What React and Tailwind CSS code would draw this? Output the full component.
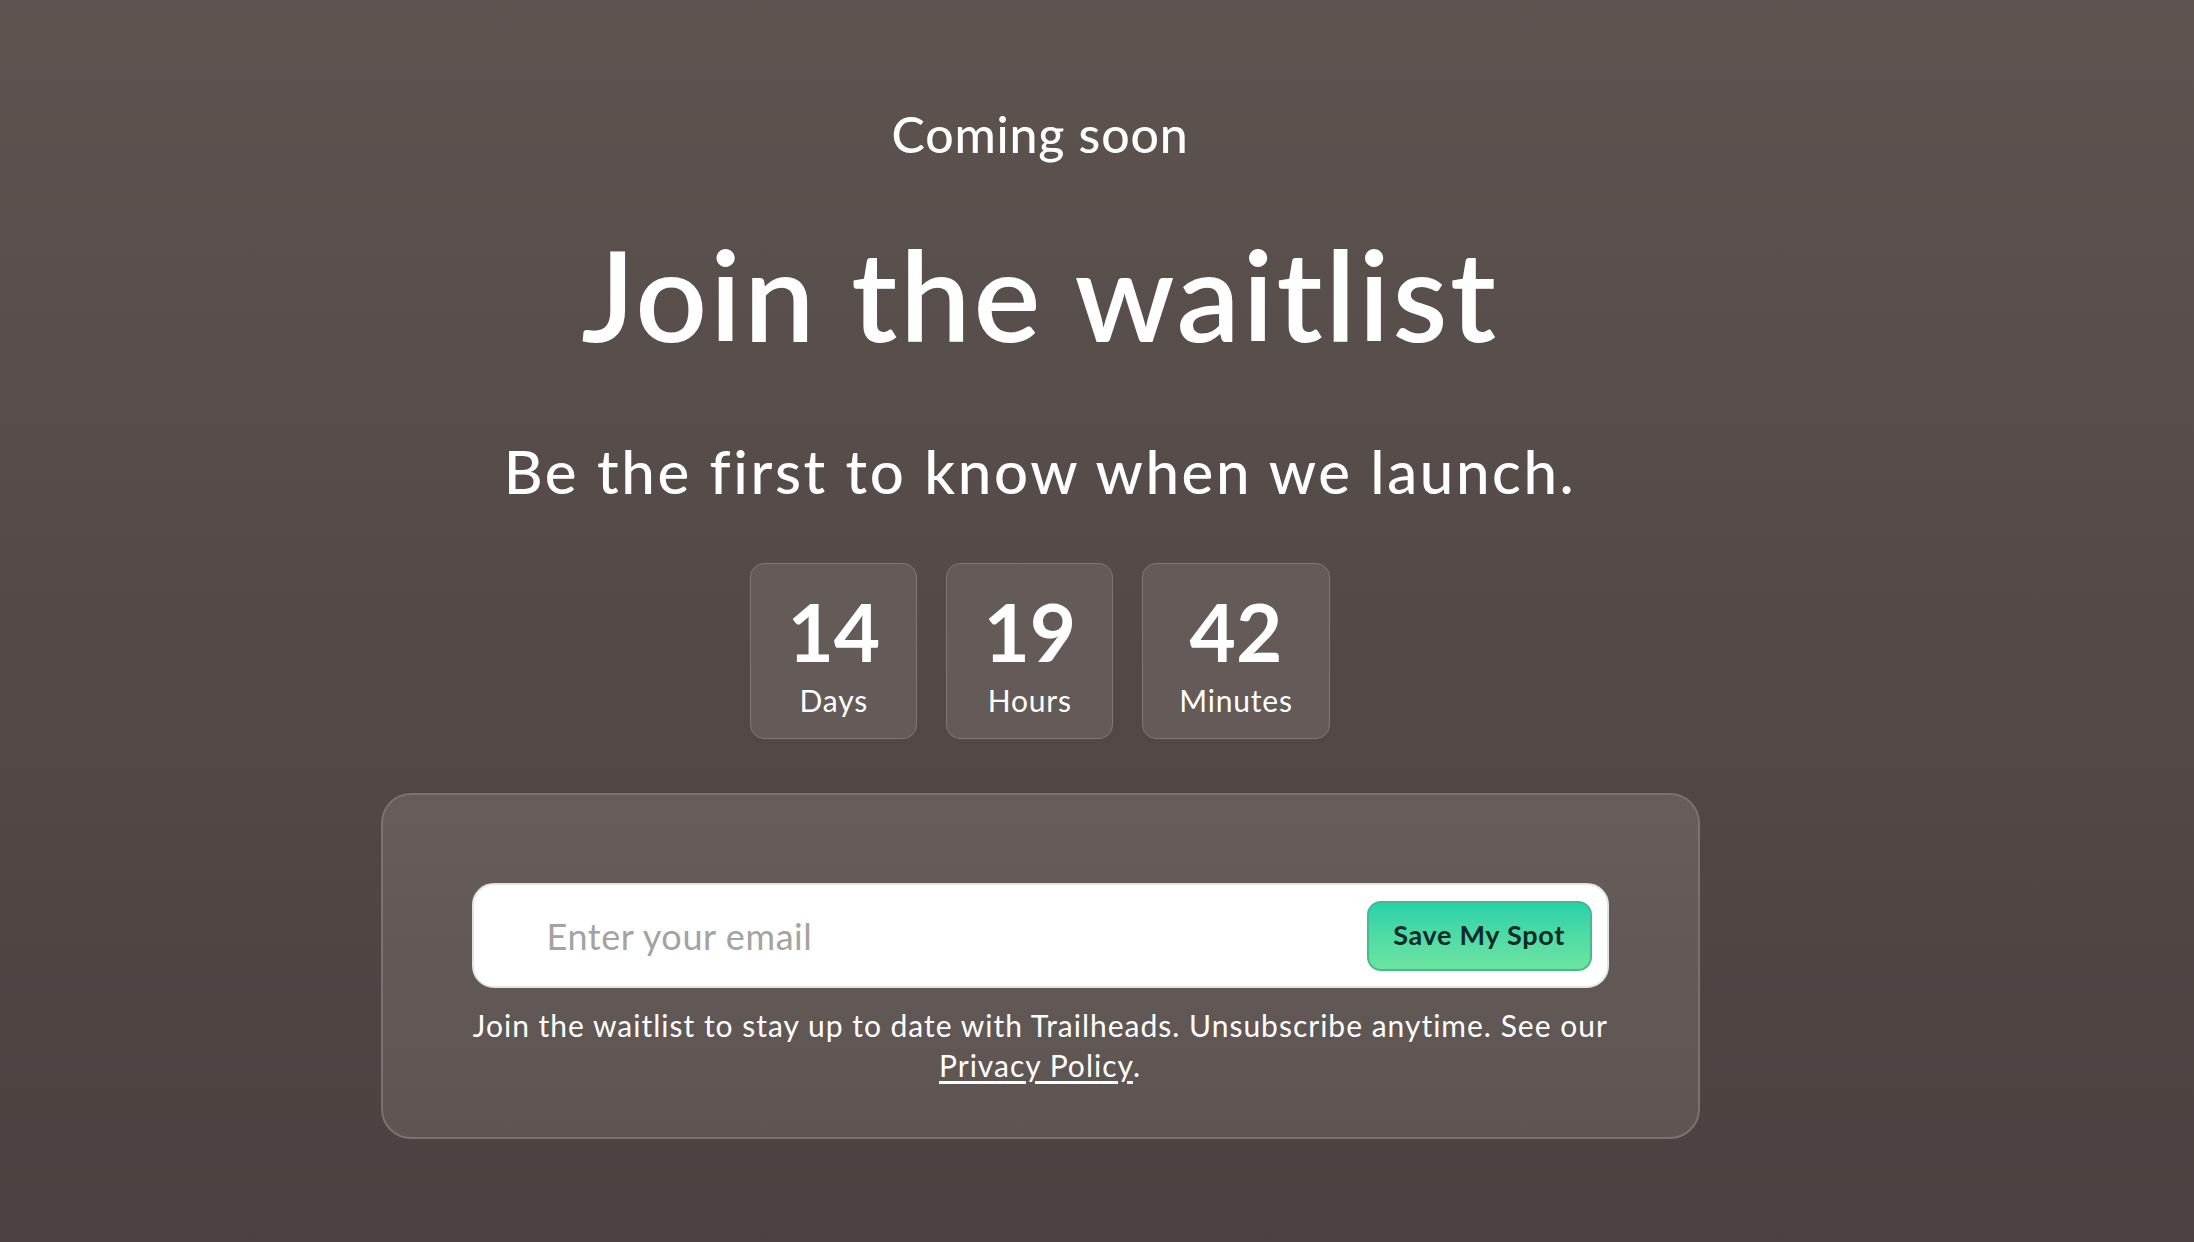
import React from 'react';

const countdown = [
  { value: '14', label: 'Days' },
  { value: '19', label: 'Hours' },
  { value: '42', label: 'Minutes' },
];

function TimeBox({ value, label }) {
  return (
    <div className="min-w-[167px] px-[36px] pt-[27px] pb-[20px] flex flex-col items-center rounded-[14px] border border-[#807774] bg-[#645b58]">
      <span className="text-[80px] leading-[80px] font-bold text-white">{value}</span>
      <span className="mt-[11px] text-[30px] leading-[36px] tracking-[0.8px] text-white">{label}</span>
    </div>
  );
}

export default function App() {
  return (
    <div
      className="min-h-screen w-full bg-gradient-to-b from-[#5d534f] to-[#4a4140] text-white"
      style={{ fontFamily: 'Lato, "Noto Sans", sans-serif' }}
    >
      <div className="w-[2080px] flex flex-col items-center pt-[104px]">
        <p className="text-[50px] leading-[60px] font-medium tracking-[0.8px]">Coming soon</p>

        <h1 className="mt-[67px] text-[126px] leading-[126px] font-semibold tracking-[2.7px]">Join the waitlist</h1>

        <p className="mt-[78px] text-[60px] leading-[72px] font-medium tracking-[2.6px]">
          Be the first to know when we launch.
        </p>

        {/* Countdown */}
        <div className="mt-[56px] flex gap-[29px]">
          {countdown.map((c) => (
            <TimeBox key={c.label} {...c} />
          ))}
        </div>

        {/* Signup card */}
        <div className="mt-[54px] w-[1319px] rounded-[30px] border-2 border-[#7b7270] bg-gradient-to-b from-[#665d5a] to-[#5e5553] px-[89px] pt-[88px] pb-[52px]">
          <form
            className="h-[105px] flex items-center rounded-[22px] border-2 border-[#e4e4e4] bg-white pl-[73px] pr-[15px]"
            onSubmit={(e) => e.preventDefault()}
          >
            <input
              type="email"
              placeholder="Enter your email"
              className="flex-1 bg-transparent text-[36px] tracking-[0.6px] text-[#333] outline-none placeholder:text-[#a3a3a3]"
            />
            <button
              type="submit"
              className="h-[70px] w-[225px] rounded-[14px] border-2 border-[#44bb8e] bg-gradient-to-b from-[#25d2aa] to-[#6ce49f] text-[27px] font-bold tracking-[0.7px] text-[#0c2a29]"
            >
              Save My Spot
            </button>
          </form>
          <p className="mt-[17px] text-center text-[30px] leading-[40px] tracking-[1px] text-white">
            Join the waitlist to stay up to date with Trailheads. Unsubscribe anytime. See our{' '}
            <a href="#" className="underline underline-offset-4">Privacy Policy</a>.
          </p>
        </div>
      </div>
    </div>
  );
}
